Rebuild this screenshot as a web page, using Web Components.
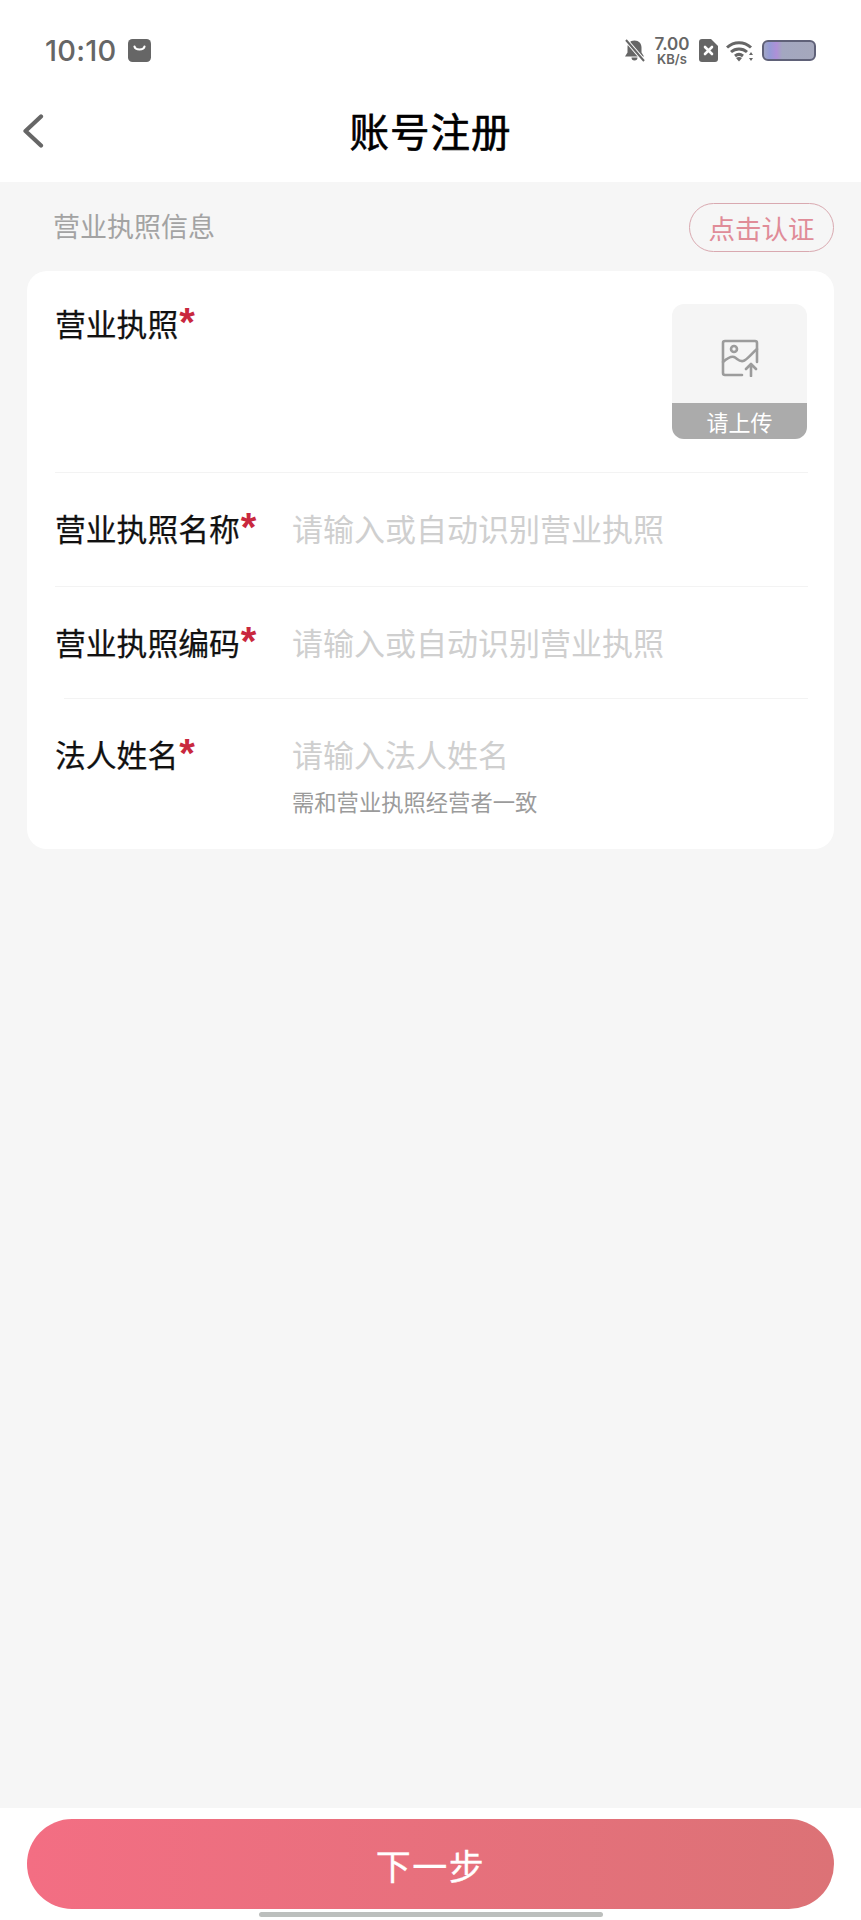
<!DOCTYPE html>
<html lang="zh">
<head>
<meta charset="utf-8">
<title>账号注册</title>
<style>
  html, body { margin: 0; height: 100%; }
  body {
    width: 861px; height: 1920px; overflow: hidden;
    display: flex; flex-direction: column;
    background: #f6f6f6;
    font-family: "Noto Sans CJK SC", "Noto Sans", sans-serif;
  }
</style>
</head>
<body>
<status-bar></status-bar>
<app-header title="账号注册"></app-header>
<section-head label="营业执照信息" action="点击认证"></section-head>
<form-card>
  <form-row label="营业执照" height="202" top="32">
    <upload-box slot="aside" text="请上传"></upload-box>
  </form-row>
  <form-row label="营业执照名称" placeholder="请输入或自动识别营业执照" height="114"></form-row>
  <form-row label="营业执照编码" placeholder="请输入或自动识别营业执照" height="112" inset="37"></form-row>
  <form-row label="法人姓名" placeholder="请输入法人姓名" hint="需和营业执照经营者一致" height="150" last></form-row>
</form-card>
<footer-bar text="下一步"></footer-bar>

<script>
  // Status bar across the top of the phone
  class StatusBar extends HTMLElement {
    constructor() {
      super();
      this.attachShadow({ mode: 'open' });
      this.shadowRoot.innerHTML = `
        <style>
          :host { display: flex; align-items: center; height: 101px; box-sizing: border-box; padding: 0 45px 0 45px; background: #fff; color: #666; font-family: "Inter", "Liberation Sans", sans-serif; }
          .time { font-size: 29px; font-weight: 500; line-height: 101px; width: 83px; letter-spacing: .2px; }
          .left { flex: 1; display: flex; align-items: center; }
          .right { display: flex; align-items: center; }
          svg { display: block; }
          .speed { display: flex; flex-direction: column; align-items: center; width: 36px; margin: 0 9px 0 9px; font-weight: 600; color: #666; }
          .speed b { font-size: 17px; line-height: 18px; font-weight: 600; }
          .speed i { font-style: normal; font-size: 13px; line-height: 13px; }
        </style>
        <div class="left">
          <span class="time">10:10</span>
          <svg width="23" height="23" viewBox="0 0 23 23"><rect width="23" height="23" rx="4.5" fill="#666"/><path d="M6.5 7.5c1 4 9 4 10 0" fill="none" stroke="#fff" stroke-width="2.2" stroke-linecap="round"/></svg>
        </div>
        <div class="right">
          <svg width="21" height="23" viewBox="0 0 21 23"><path d="M10.5 1.500c-4.500 0-7 3-7 7v5L1 17.500h19l-2.500-4v-5c0-4-2.500-7-7-7z M7.500 18.500h6a3 3 0 0 1-6 0z" fill="#666"/><path d="M2 1l18 21" stroke="#fff" stroke-width="4"/><path d="M2 1l18 21" stroke="#666" stroke-width="2"/></svg>
          <div class="speed"><b>7.00</b><i>KB/s</i></div>
          <svg width="19" height="23" viewBox="0 0 19 23"><path d="M3 0h9l7 7v13a3 3 0 0 1-3 3H3a3 3 0 0 1-3-3V3a3 3 0 0 1 3-3z" fill="#666"/><path d="M6 8l7 7M13 8l-7 7" stroke="#fff" stroke-width="2.600" stroke-linecap="round"/></svg>
          <svg style="margin-left:8px" width="28" height="22" viewBox="0 0 28 22"><g fill="none" stroke="#666" stroke-width="3"><path d="M1 7.500c7-6.500 17-6.500 24 0"/><path d="M5 12c4.500-4 11.500-4 16 0"/><path d="M9 16c2.500-2 5.500-2 8 0"/></g><path d="M13 21.500l-3-3.500c2-1.300 4-1.300 6 0z" fill="#666"/><path d="M25 12l2 3h-4zM25 21l2-3h-4z" fill="#666"/></svg>
          <svg style="margin-left:8px" width="54" height="21" viewBox="0 0 54 21">
            <defs><linearGradient id="b" x1="0" x2="1" y1="0" y2="0"><stop offset="0" stop-color="#a3a8c4"/><stop offset=".13" stop-color="#959ad6"/><stop offset=".26" stop-color="#ae90d8"/><stop offset=".37" stop-color="#a3a7c0"/><stop offset="1" stop-color="#a5a8bc"/></linearGradient></defs>
            <rect x="1" y="1" width="52" height="19" rx="5" fill="url(#b)" stroke="#5f6178" stroke-width="2"/>
          </svg>
        </div>
      `;
    }
  }

  class AppHeader extends HTMLElement {
    constructor() {
      super();
      this.attachShadow({ mode: 'open' });
      this.shadowRoot.innerHTML = `
        <style>
          :host { display: flex; justify-content: center; height: 81px; box-sizing: border-box; padding-top: 1px; background: #fff; position: relative; }
          .back { position: absolute; left: 22px; top: 13px; display: block; }
          h1 { margin: 0; font-size: 39.500px; font-weight: 400; -webkit-text-stroke: .6px #000; line-height: 56px; color: #000; letter-spacing: 1px; }
        </style>
        <svg class="back" width="22" height="34" viewBox="0 0 22 34"><path d="M19 2.500L3.500 17 19 31.500" fill="none" stroke="#666" stroke-width="4.200" stroke-linecap="round" stroke-linejoin="round"/></svg>
        <h1>${this.getAttribute('title')}</h1>
      `;
    }
  }

  class SectionHead extends HTMLElement {
    constructor() {
      super();
      this.attachShadow({ mode: 'open' });
      this.shadowRoot.innerHTML = `
        <style>
          :host { display: flex; align-items: center; justify-content: space-between; height: 89px; box-sizing: border-box; padding: 0 27px 2px 53px; }
          .label { font-size: 27px; color: #a3a3a3; }
          .action { width: 145px; height: 49px; box-sizing: border-box; margin-top: 3px; display: flex; align-items: center; justify-content: center; border: 1px solid #d9a9b0; border-radius: 25px; font-size: 26.500px; color: #e08c98; }
        </style>
        <span class="label">${this.getAttribute('label')}</span>
        <span class="action">${this.getAttribute('action')}</span>
      `;
    }
  }

  class FormCard extends HTMLElement {
    constructor() {
      super();
      this.attachShadow({ mode: 'open' });
      this.shadowRoot.innerHTML = `
        <style>
          :host { display: block; margin: 0 27px; background: #fff; border-radius: 20px; }
        </style>
        <slot></slot>
      `;
    }
  }

  class FormRow extends HTMLElement {
    constructor() {
      super();
      this.attachShadow({ mode: 'open' });
      const height = this.getAttribute('height');
      const inset = this.getAttribute('inset') || 28;
      const top = this.getAttribute('top') || 35;
      const placeholder = this.getAttribute('placeholder');
      const hint = this.getAttribute('hint');
      this.shadowRoot.innerHTML = `
        <style>
          :host { display: block; height: ${height}px; box-sizing: border-box; padding: ${top}px 27px 0 0; position: relative; }
          .row { display: flex; align-items: flex-start; padding-left: 28px; }
          .label { width: 237px; flex: none; font-size: 30.800px; line-height: 40px; color: #111; -webkit-text-stroke: .25px #111; white-space: nowrap; }
          .star { font-family: "Liberation Sans", sans-serif; font-size: 40px; font-weight: 700; line-height: 0; color: #c9283e; -webkit-text-stroke: 0; vertical-align: 0; margin-left: 1px; }
          .body { flex: 1; }
          .input { font-size: 31px; line-height: 40px; color: #cfcfcf; white-space: nowrap; }
          .hint { font-size: 22.300px; line-height: 30px; margin-top: 12px; color: #9b9b9b; white-space: nowrap; }
          .line { position: absolute; left: ${inset}px; right: 26px; bottom: 0; height: 1px; background: #f3f3f3; }
          :host([last]) .line { display: none; }
        </style>
        <div class="row">
          <div class="label">${this.getAttribute('label')}<span class="star">*</span></div>
          <div class="body">
            ${placeholder ? `<div class="input">${placeholder}</div>` : ''}
            ${hint ? `<div class="hint">${hint}</div>` : ''}
          </div>
          <slot name="aside"></slot>
        </div>
        <div class="line"></div>
      `;
    }
  }

  class UploadBox extends HTMLElement {
    constructor() {
      super();
      this.attachShadow({ mode: 'open' });
      this.shadowRoot.innerHTML = `
        <style>
          :host { display: flex; flex-direction: column; width: 135px; height: 135px; margin-top: 1px; background: #f5f5f5; border-radius: 12px; overflow: hidden; }
          .pic { flex: 1; display: flex; align-items: center; justify-content: center; padding-top: 8px; box-sizing: border-box; }
          .bar { height: 36px; display: flex; align-items: center; justify-content: center; background: #ababab; color: #fff; font-size: 22px; }
          svg { display: block; }
        </style>
        <div class="pic">
          <svg width="38" height="38" viewBox="0 0 38 38" fill="none" stroke="#9c9c9c" stroke-width="2.600" stroke-linejoin="round" stroke-linecap="round">
            <path d="M21 36H4a2 2 0 0 1-2-2V4a2 2 0 0 1 2-2h30a2 2 0 0 1 2 2v19"/>
            <circle cx="13" cy="10" r="3"/>
            <path d="M2 23c4-3.500 8-6 11-5s5 5 9 4 8-7 14-12"/>
            <path d="M30 37V25M25 30l5-5 5 5"/>
          </svg>
        </div>
        <div class="bar">${this.getAttribute('text')}</div>
      `;
    }
  }

  class FooterBar extends HTMLElement {
    constructor() {
      super();
      this.attachShadow({ mode: 'open' });
      this.shadowRoot.innerHTML = `
        <style>
          :host { display: flex; flex-direction: column; align-items: center; margin-top: auto; height: 112px; box-sizing: border-box; padding-top: 11px; background: #fff; }
          .btn { width: 807px; height: 90px; border-radius: 45px; display: flex; align-items: center; justify-content: center; background: linear-gradient(90deg, #f36e83, #dc7276); color: #fff; font-size: 35px; letter-spacing: 1.500px; -webkit-text-stroke: .3px #fff; }
          .home { width: 344px; height: 5px; margin-top: 3px; border-radius: 3px; background: #bcbfbd; }
        </style>
        <div class="btn">${this.getAttribute('text')}</div>
        <div class="home"></div>
      `;
    }
  }

  customElements.define('status-bar', StatusBar);
  customElements.define('app-header', AppHeader);
  customElements.define('section-head', SectionHead);
  customElements.define('form-card', FormCard);
  customElements.define('form-row', FormRow);
  customElements.define('upload-box', UploadBox);
  customElements.define('footer-bar', FooterBar);
</script>
</body>
</html>
